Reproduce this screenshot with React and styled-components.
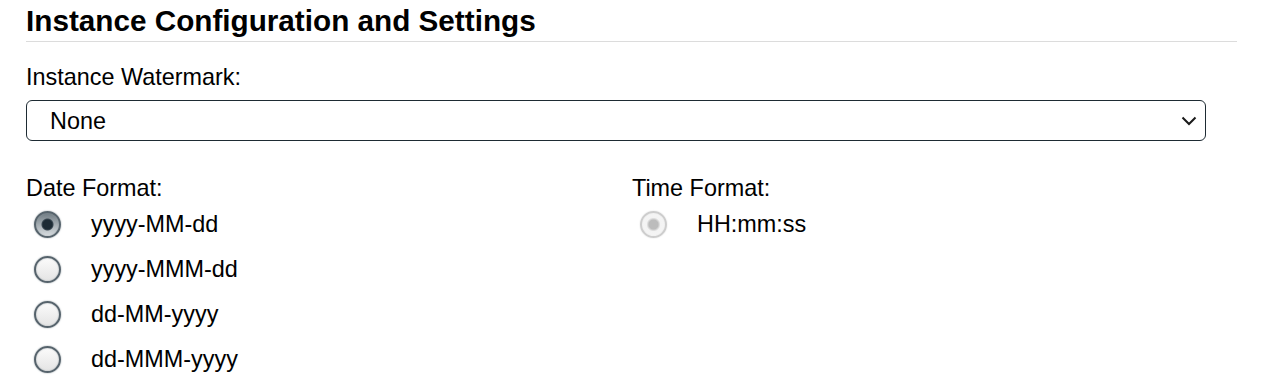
import React from "react";
import styled, { createGlobalStyle } from "styled-components";

const Global = createGlobalStyle`
  html, body { margin: 0; padding: 0; background: #fff; }
  body { font-family: "Liberation Sans", Arial, sans-serif; color: #000; }
`;

const Page = styled.div`
  padding: 4px 40px 0 26px;
  width: 1211px;
`;

const Heading = styled.h2`
  margin: 0;
  font-size: 29.7px;
  line-height: 34px;
  font-weight: 700;
  padding-bottom: 3px;
  border-bottom: 1px solid #dcdcdc;
`;

const FieldLabel = styled.div`
  font-size: 23.4px;
  line-height: 27px;
  margin-top: ${(p) => p.$mt || 0}px;
`;

const SelectBox = styled.div`
  margin-top: 9px;
  width: 1180px;
  height: 41px;
  box-sizing: border-box;
  border: 1px solid #1e2b33;
  border-radius: 6px;
  display: flex;
  align-items: center;
  padding: 0 8px 0 0;
  background: #fff;
`;

const NativeSelect = styled.select`
  flex: 1;
  appearance: none;
  border: none;
  outline: none;
  background: transparent;
  font-family: "Liberation Sans", Arial, sans-serif;
  font-size: 23.4px;
  color: #000;
  padding: 0 0 0 23px;
  height: 100%;
`;

const Columns = styled.div`
  display: grid;
  grid-template-columns: 606px 1fr;
  margin-top: 34px;
`;

const Group = styled.div`
  display: flex;
  flex-direction: column;
`;

const Option = styled.label`
  display: flex;
  align-items: flex-start;
  height: 45px;
  font-size: 23.4px;
  line-height: 45px;
`;

const Radio = styled.input.attrs({ type: "radio" })`
  appearance: none;
  margin: 9px 30px 0 8px;
  width: 27px;
  height: 27px;
  box-sizing: border-box;
  border-radius: 50%;
  flex: none;
  border: 2px solid ${(p) => (p.disabled ? "#cdcdcd" : "#56636c")};
  box-shadow: 0 0 1.5px ${(p) => (p.disabled ? "#d8d8d8" : "#7c878e")},
    inset 0 0 1.5px ${(p) => (p.disabled ? "#e0e0e0" : "#8b959b")};
  background: ${(p) =>
    p.disabled
      ? "radial-gradient(circle at 50% 50%, #bcbcbc 0 4.5px, #d2d2d2 5.5px, #f3f3f3 7px, #f7f7f7 100%)"
      : p.checked
      ? "radial-gradient(circle at 50% 50%, #1d2b35 0 4.5px, #3a4852 5.5px, transparent 6.5px), linear-gradient(#6f7b83, #d9dee1)"
      : "linear-gradient(#fbfbfb, #e4e4e4)"};
`;

const OptionText = styled.span`
  color: #000;
`;

const Chevron = () => (
  <svg width="16" height="10" viewBox="0 0 16 10" aria-hidden="true">
    <path d="M1.5 1.5 L8 8 L14.5 1.5" fill="none" stroke="#1a1a1a" strokeWidth="2" />
  </svg>
);

const dateFormats = ["yyyy-MM-dd", "yyyy-MMM-dd", "dd-MM-yyyy", "dd-MMM-yyyy"];

export default function App() {
  return (
    <Page>
      <Global />
      <Heading>Instance Configuration and Settings</Heading>
      <FieldLabel $mt={22}>Instance Watermark:</FieldLabel>
      <SelectBox>
        <NativeSelect defaultValue="none">
          <option value="none">None</option>
        </NativeSelect>
        <Chevron />
      </SelectBox>
      <Columns>
        <Group>
          <FieldLabel>Date Format:</FieldLabel>
          {dateFormats.map((f, i) => (
            <Option key={f}>
              <Radio name="date" checked={i === 0} readOnly />
              <OptionText>{f}</OptionText>
            </Option>
          ))}
        </Group>
        <Group>
          <FieldLabel>Time Format:</FieldLabel>
          <Option>
            <Radio name="time" checked disabled readOnly />
            <OptionText>HH:mm:ss</OptionText>
          </Option>
        </Group>
      </Columns>
    </Page>
  );
}
